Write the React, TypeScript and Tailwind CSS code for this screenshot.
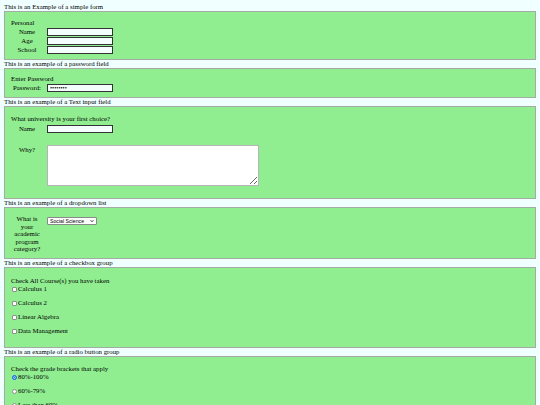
import type { ReactNode } from 'react'

function Caption({ children }: { children: ReactNode }) {
  return <p className="h-[8px] whitespace-nowrap">{children}</p>
}

function Box({ className, children }: { className: string; children: ReactNode }) {
  return (
    <div className={`border border-[#a3aba3] bg-[#90ee90] pl-[6px] ${className}`}>{children}</div>
  )
}

function TextInput({ type = 'text', value }: { type?: string; value?: string }) {
  return (
    <input
      type={type}
      defaultValue={value}
      className="block h-[8px] w-[66px] border border-[#333] bg-[#f4fffd] px-[2px] text-[6px] leading-[6px] outline-none"
    />
  )
}

const COURSES = ['Calculus 1', 'Calculus 2', 'Linear Algebra', 'Data Management']
const GRADES = ['80%-100%', '60%-79%', 'Less than 60%']

export default function App() {
  return (
    <div className="min-h-[405px] overflow-hidden bg-[#f0ffff] px-[4px] pt-[3px] font-['Liberation_Serif','Times_New_Roman',serif] text-[6.8px] leading-[8px] text-black">
      <Caption>This is an Example of a simple form</Caption>
      <Box className="h-[49px] pt-[7px]">
        <p>Personal</p>
        <div className="mt-[1px] grid grid-cols-[32px_66px] items-center gap-x-[4px] gap-y-[1px]">
          <span className="text-center">Name</span>
          <TextInput />
          <span className="text-center">Age</span>
          <TextInput />
          <span className="text-center">School</span>
          <TextInput />
        </div>
      </Box>

      <Caption>This is an example of a password field</Caption>
      <Box className="h-[30px] pt-[6px]">
        <p>Enter Password</p>
        <div className="mt-[1px] grid grid-cols-[32px_66px] items-center gap-x-[4px]">
          <span className="text-center">Password:</span>
          <TextInput type="password" value="password" />
        </div>
      </Box>

      <Caption>This is an example of a Text input field</Caption>
      <Box className="h-[93px] pt-[8px]">
        <p>What university is your first choice?</p>
        <div className="mt-[2px] grid grid-cols-[32px_66px] items-center gap-x-[4px]">
          <span className="text-center">Name</span>
          <TextInput />
        </div>
        <div className="mt-[12px] flex gap-x-[4px]">
          <span className="w-[32px] pt-[1px] text-center">Why?</span>
          <textarea className="block h-[41px] w-[212px] border border-[#b5b5b5] bg-white" />
        </div>
      </Box>

      <Caption>This is an example of a dropdown list</Caption>
      <Box className="h-[52px] pt-[7px]">
        <div className="flex items-start gap-x-[4px]">
          <p className="w-[32px] text-center leading-[7.6px]">
            What is
            <br />
            your
            <br />
            academic
            <br />
            program
            <br />
            category?
          </p>
          <div className="relative mt-[2px]">
            <select
              defaultValue="Social Science"
              className="block h-[8px] w-[50px] appearance-none rounded-[1px] border border-[#8a8a8a] bg-white pl-[2px] font-['Liberation_Sans',Arial,sans-serif] text-[5.2px] leading-[6px] text-black outline-none"
            >
              <option>Social Science</option>
              <option>Engineering</option>
              <option>Business</option>
            </select>
            <svg
              viewBox="0 0 10 10"
              className="pointer-events-none absolute right-[3px] top-[2px] h-[4px] w-[4px]"
            >
              <path d="M1.5 3 L5 7 L8.5 3" fill="none" stroke="#000" strokeWidth="1.8" />
            </svg>
          </div>
        </div>
      </Box>

      <Caption>This is an example of a checkbox group</Caption>
      <Box className="h-[81px] pt-[9px]">
        <p>Check All Course(s) you have taken</p>
        <div className="flex flex-col gap-y-[6px]">
          {COURSES.map(c => (
            <label key={c} className="flex h-[8px] items-center">
              <input
                type="checkbox"
                className="ml-[1px] mr-[1px] h-[5px] w-[5px] appearance-none rounded-[1px] border border-[#8f8f8f] bg-white"
              />
              {c}
            </label>
          ))}
        </div>
      </Box>

      <Caption>This is an example of a radio button group</Caption>
      <Box className="h-[60px] pt-[8px]">
        <p>Check the grade brackets that apply</p>
        <div className="flex flex-col gap-y-[6px]">
          {GRADES.map((g, i) => (
            <label key={g} className="flex h-[8px] items-center">
              <input
                type="radio"
                name="grade"
                defaultChecked={i === 0}
                className="ml-[1px] mr-[1px] h-[5px] w-[5px] appearance-none rounded-full border border-[#8f8f8f] bg-white checked:border-[#1a73e8] checked:bg-[#1a73e8] checked:shadow-[inset_0_0_0_1px_#9ec2f5]"
              />
              {g}
            </label>
          ))}
        </div>
      </Box>
    </div>
  )
}
